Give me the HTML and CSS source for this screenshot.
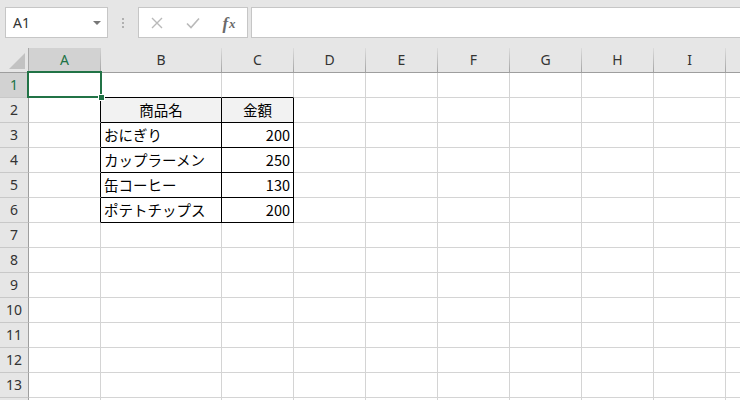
FILE: index.html
```html
<!DOCTYPE html>
<html lang="ja">
<head>
<meta charset="utf-8">
<title>Sheet</title>
<link rel="stylesheet" href="styles.css">
</head>
<body>
<div class="app">
  <div class="toolbar">
    <div class="namebox">
      <span class="nb-text">A1</span>
      <span class="nb-caret"></span>
    </div>
    <div class="grip"><i></i><i></i><i></i></div>
    <div class="fbuttons">
      <span class="fbtn">
        <svg width="12" height="12" viewBox="0 0 12 12"><path d="M1 1 L11 11 M11 1 L1 11" stroke="#b9b9b9" stroke-width="1.4" fill="none"/></svg>
      </span>
      <span class="fbtn">
        <svg width="14" height="12" viewBox="0 0 14 12"><path d="M1 6.5 L5 10.5 L13 1.5" stroke="#b9b9b9" stroke-width="1.6" fill="none"/></svg>
      </span>
      <span class="fbtn fx"><span class="fx-f">f</span><span class="fx-x">x</span></span>
    </div>
    <div class="finput"></div>
  </div>

  <div class="sheet">
    <div class="grid">
      <div class="corner"><span class="tri"></span></div>
      <div class="ch sel">A</div>
      <div class="ch">B</div>
      <div class="ch">C</div>
      <div class="ch">D</div>
      <div class="ch">E</div>
      <div class="ch">F</div>
      <div class="ch">G</div>
      <div class="ch">H</div>
      <div class="ch">I</div>
      <div class="ch"></div>

      <div class="rh sel">1</div>
      <div class="c"></div><div class="c bb"></div><div class="c bb"></div><div class="c"></div><div class="c"></div><div class="c"></div><div class="c"></div><div class="c"></div><div class="c"></div><div class="c"></div>

      <div class="rh">2</div>
      <div class="c br"></div><div class="c t th">商品名</div><div class="c t th">金額</div><div class="c"></div><div class="c"></div><div class="c"></div><div class="c"></div><div class="c"></div><div class="c"></div><div class="c"></div>

      <div class="rh">3</div>
      <div class="c br"></div><div class="c t">おにぎり</div><div class="c t num">200</div><div class="c"></div><div class="c"></div><div class="c"></div><div class="c"></div><div class="c"></div><div class="c"></div><div class="c"></div>

      <div class="rh">4</div>
      <div class="c br"></div><div class="c t">カップラーメン</div><div class="c t num">250</div><div class="c"></div><div class="c"></div><div class="c"></div><div class="c"></div><div class="c"></div><div class="c"></div><div class="c"></div>

      <div class="rh">5</div>
      <div class="c br"></div><div class="c t">缶コーヒー</div><div class="c t num">130</div><div class="c"></div><div class="c"></div><div class="c"></div><div class="c"></div><div class="c"></div><div class="c"></div><div class="c"></div>

      <div class="rh">6</div>
      <div class="c br"></div><div class="c t">ポテトチップス</div><div class="c t num">200</div><div class="c"></div><div class="c"></div><div class="c"></div><div class="c"></div><div class="c"></div><div class="c"></div><div class="c"></div>

      <div class="rh">7</div>
      <div class="c"></div><div class="c"></div><div class="c"></div><div class="c"></div><div class="c"></div><div class="c"></div><div class="c"></div><div class="c"></div><div class="c"></div><div class="c"></div>
      <div class="rh">8</div>
      <div class="c"></div><div class="c"></div><div class="c"></div><div class="c"></div><div class="c"></div><div class="c"></div><div class="c"></div><div class="c"></div><div class="c"></div><div class="c"></div>
      <div class="rh">9</div>
      <div class="c"></div><div class="c"></div><div class="c"></div><div class="c"></div><div class="c"></div><div class="c"></div><div class="c"></div><div class="c"></div><div class="c"></div><div class="c"></div>
      <div class="rh">10</div>
      <div class="c"></div><div class="c"></div><div class="c"></div><div class="c"></div><div class="c"></div><div class="c"></div><div class="c"></div><div class="c"></div><div class="c"></div><div class="c"></div>
      <div class="rh">11</div>
      <div class="c"></div><div class="c"></div><div class="c"></div><div class="c"></div><div class="c"></div><div class="c"></div><div class="c"></div><div class="c"></div><div class="c"></div><div class="c"></div>
      <div class="rh">12</div>
      <div class="c"></div><div class="c"></div><div class="c"></div><div class="c"></div><div class="c"></div><div class="c"></div><div class="c"></div><div class="c"></div><div class="c"></div><div class="c"></div>
      <div class="rh">13</div>
      <div class="c"></div><div class="c"></div><div class="c"></div><div class="c"></div><div class="c"></div><div class="c"></div><div class="c"></div><div class="c"></div><div class="c"></div><div class="c"></div>
      <div class="rh"></div>
      <div class="c"></div><div class="c"></div><div class="c"></div><div class="c"></div><div class="c"></div><div class="c"></div><div class="c"></div><div class="c"></div><div class="c"></div><div class="c"></div>
    </div>
    <div class="selection"><span class="handle"></span></div>
  </div>
</div>
</body>
</html>
```

FILE: styles.css
```css
* { box-sizing: border-box; }
html, body { margin: 0; padding: 0; }
body {
  width: 740px;
  height: 400px;
  overflow: hidden;
  background: #ffffff;
  font-family: "Noto Sans CJK JP", "Noto Sans", sans-serif;
  color: #000;
}
.app { width: 740px; height: 400px; overflow: hidden; background: #e6e6e6; }

.toolbar {
  height: 48px;
  display: flex;
  align-items: flex-start;
  padding: 7px 0 0 5px;
  background: #e6e6e6;
}
.namebox {
  width: 103px;
  height: 31px;
  background: #fff;
  border: 1px solid #c6c6c6;
  display: flex;
  align-items: center;
  justify-content: space-between;
  padding: 0 6px 0 7px;
}
.nb-text {
  font-family: "Noto Sans", "Noto Sans CJK JP", sans-serif;
  font-size: 14px;
  color: #333;
  line-height: 1;
  margin-top: 1px;
}
.nb-caret {
  width: 0; height: 0;
  border-left: 4px solid transparent;
  border-right: 4px solid transparent;
  border-top: 4px solid #777;
}
.grip {
  width: 30px;
  height: 31px;
  display: flex;
  flex-direction: column;
  align-items: center;
  justify-content: center;
  gap: 2px;
}
.grip i { display: block; width: 2px; height: 2px; background: #b0b0b0; }
.fbuttons {
  width: 110px;
  height: 31px;
  background: #fff;
  border: 1px solid #c6c6c6;
  display: flex;
  align-items: center;
}
.fbtn {
  width: 36px;
  height: 29px;
  display: flex;
  align-items: center;
  justify-content: center;
}
.fbtn svg { display: block; }
.fx {
  font-family: "Liberation Serif", serif;
  font-style: italic;
  font-weight: bold;
  color: #6a6a6a;
  line-height: 1;
  padding-top: 1px;
}
.fx-f { font-size: 17px; }
.fx-x { font-size: 13px; margin-left: 1px; }
.finput {
  flex: 1;
  height: 31px;
  margin-left: 3px;
  margin-right: -2px;
  background: #fff;
  border: 1px solid #c6c6c6;
}

.sheet { position: relative; }
.grid {
  display: grid;
  grid-template-columns: 29px 72px 121px 72px 72px 72px 72px 72px 72px 72px 72px;
  grid-auto-rows: 25px;
  background: #fff;
}
.corner {
  position: relative;
  background: #e6e6e6;
  border-right: 1px solid #a8a8a8;
  border-bottom: 1px solid #9e9e9e;
}
.tri {
  position: absolute;
  right: 3px;
  bottom: 3px;
  width: 0; height: 0;
  border-left: 16px solid transparent;
  border-bottom: 16px solid #c2c2c2;
}
.ch {
  background: linear-gradient(to bottom, #dcdcdc, #a4a4a4) right top / 1px 100% no-repeat, #e6e6e6;
  border-bottom: 1px solid #9e9e9e;
  font-family: "Noto Sans", sans-serif;
  font-size: 14px;
  color: #333;
  display: flex;
  align-items: center;
  justify-content: center;
  padding-right: 1px;
  line-height: 1;
}
.ch.sel { background: linear-gradient(to bottom, #d2d2d2, #a4a4a4) right top / 1px 100% no-repeat, #d2d2d2; color: #217346; }
.rh {
  background: #e6e6e6;
  border-right: 1px solid #9e9e9e;
  border-bottom: 1px solid #c8c8c8;
  font-family: "Noto Sans", sans-serif;
  font-size: 14px;
  color: #333;
  display: flex;
  align-items: center;
  justify-content: center;
  line-height: 1;
}
.rh.sel { background: #d2d2d2; color: #217346; }
.c {
  border-right: 1px solid #d4d4d4;
  border-bottom: 1px solid #d4d4d4;
  font-size: 14.5px;
  line-height: 1;
  display: flex;
  align-items: center;
  padding: 1px 3px 0 3px;
  white-space: nowrap;
  overflow: hidden;
}
.c.br { border-right-color: #000; }
.c.bb { border-bottom-color: #000; }
.c.t { border-right-color: #000; border-bottom-color: #000; }
.c.th { background: #f2f2f2; justify-content: center; }
.c.num { justify-content: flex-end; }

.selection {
  position: absolute;
  left: 27px;
  top: 23px;
  width: 75px;
  height: 27px;
  border: 2px solid #217346;
}
.handle {
  position: absolute;
  right: -5px;
  bottom: -5px;
  width: 7px;
  height: 7px;
  background: #217346;
  border: 1px solid #fff;
}
```
